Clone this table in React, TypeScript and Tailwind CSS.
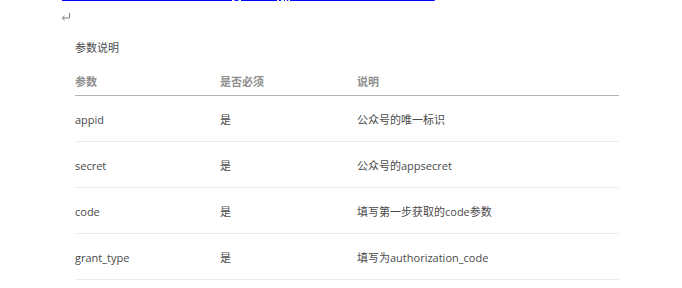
import React from "react";

const rows = [
  { name: "appid", req: "是", desc: "公众号的唯一标识" },
  { name: "secret", req: "是", desc: "公众号的appsecret" },
  { name: "code", req: "是", desc: "填写第一步获取的code参数" },
  { name: "grant_type", req: "是", desc: "填写为authorization_code" },
];

export default function App() {
  return (
    <div
      className="w-[682px] h-[288px] bg-white overflow-hidden"
      style={{ fontFamily: '"Open Sans", "Noto Sans CJK SC", sans-serif' }}
    >
      <div className="h-[3px] overflow-hidden pl-[62px]">
        <a
          href="#"
          className="block -mt-[15px] text-[14.7px] leading-[17px] text-[#0000ff] underline decoration-[1.5px] whitespace-nowrap"
          style={{ fontFamily: '"Liberation Sans", sans-serif' }}
        >
          =SECRET&amp;code=CODE&amp;grant_type=authorization_code
        </a>
      </div>
      <div className="mt-[10px] pl-[61px] h-[7px]">
        <svg width="10" height="8" viewBox="0 0 10 8" className="block">
          <path d="M8.5 0 V5 H1.5" fill="none" stroke="#7a7a7a" strokeWidth="1" />
          <path d="M3.6 2.8 L1.3 5 L3.6 7.2" fill="none" stroke="#7a7a7a" strokeWidth="1" />
        </svg>
      </div>
      <div className="mt-[20px] pl-[75px] text-[11px] leading-[16px] text-[#4a4a4a]">参数说明</div>
      <div className="mt-[14px] ml-[75px] w-[544px] text-[11px]">
        <div className="flex h-[26px] items-center border-b border-[#b3b3b3] font-semibold text-[#8f8f8f]">
          <div className="w-[145px]">参数</div>
          <div className="w-[137px]">是否必须</div>
          <div className="flex-1">说明</div>
        </div>
        {rows.map((r) => (
          <div key={r.name} className="flex h-[46px] items-center pt-[3px] border-b border-[#ececec] text-[#4a4a4a]">
            <div className="w-[145px]">{r.name}</div>
            <div className="w-[137px]">{r.req}</div>
            <div className="flex-1">{r.desc}</div>
          </div>
        ))}
      </div>
    </div>
  );
}
